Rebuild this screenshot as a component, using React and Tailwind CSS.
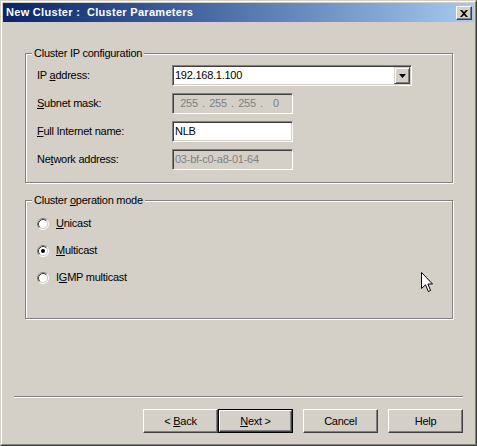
import React from 'react';

function Key({ children }) {
  return <span className="underline underline-offset-[1px] decoration-1">{children}</span>;
}

function Sunken({ className = '', children }) {
  return (
    <div
      className={`h-[21px] flex items-center border border-t-[#808080] border-l-[#808080] border-r-white border-b-white shadow-[inset_1px_1px_0_#404040,inset_-1px_-1px_0_#d4d0c8] ${className}`}
    >
      {children}
    </div>
  );
}

function Button({ children, isDefault = false, className = '' }) {
  const face = (
    <div className="h-full flex items-center justify-center border border-t-white border-l-white border-r-[#404040] border-b-[#404040] shadow-[inset_-1px_-1px_0_#808080]">
      {children}
    </div>
  );
  if (isDefault) {
    return <div className={`w-[75px] h-[24px] border border-black ${className}`}>{face}</div>;
  }
  return <div className={`w-[75px] h-[24px] ${className}`}>{face}</div>;
}

function Radio({ checked }) {
  return (
    <svg width="12" height="12" viewBox="0 0 12 12" className="shrink-0">
      <circle cx="6" cy="6" r="4.5" fill="#fff" />
      <path d="M2.11 9.89 A5.5 5.5 0 0 1 9.89 2.11" fill="none" stroke="#808080" />
      <path d="M9.89 2.11 A5.5 5.5 0 0 1 2.11 9.89" fill="none" stroke="#fff" />
      <path d="M2.82 9.18 A4.5 4.5 0 0 1 9.18 2.82" fill="none" stroke="#404040" />
      <path d="M9.18 2.82 A4.5 4.5 0 0 1 2.82 9.18" fill="none" stroke="#d4d0c8" />
      {checked && <circle cx="6" cy="6" r="2" fill="#000" />}
    </svg>
  );
}

function Row({ label, children }) {
  return (
    <div className="h-[21px] flex items-center">
      <div className="w-[135px]">{label}</div>
      {children}
    </div>
  );
}

export default function App() {
  return (
    <div className="relative w-[477px] h-[446px] overflow-hidden bg-[#d4d0c8] font-['Liberation_Sans',Arial,sans-serif] text-[11px] leading-[13px] tracking-[-0.25px] text-black">
      <div className="h-full border border-t-[#d4d0c8] border-l-[#d4d0c8] border-r-[#404040] border-b-[#404040]">
        <div className="h-full flex flex-col p-px border border-t-white border-l-white border-r-[#808080] border-b-[#808080]">
          {/* Title bar */}
          <div className="h-[19px] shrink-0 flex items-center justify-between pl-[3px] pr-[2px] bg-gradient-to-r from-[#0a246a] to-[#a6caf0]">
            <span className="text-white font-bold tracking-[0.3px] whitespace-pre">New Cluster :  Cluster Parameters</span>
            <div className="w-[16px] h-[14px] mt-[1px] flex items-center justify-center bg-[#d4d0c8] border border-t-white border-l-white border-r-[#404040] border-b-[#404040] shadow-[inset_-1px_-1px_0_#808080]">
              <svg width="8" height="7" viewBox="0 0 8 7">
                <path d="M0 0h2l2 2 2-2h2L5 3.5 8 7H6L4 5 2 7H0l3-3.5z" fill="#000" />
              </svg>
            </div>
          </div>

          {/* Cluster IP configuration */}
          <fieldset className="mt-[25px] ml-[22px] mr-[21px] pt-[5px] pb-[12px] border border-[#808080] shadow-[inset_1px_1px_0_#fff,1px_1px_0_#fff]">
            <legend className="ml-[6px] px-[2px] bg-[#d4d0c8]">Cluster IP configuration</legend>
            <div className="pl-[11px] flex flex-col gap-[7px]">
              <Row label={<>IP <Key>a</Key>ddress:</>}>
                <Sunken className="w-[240px] bg-white justify-between pl-[2px] pr-[1px]">
                  <span>192.168.1.100</span>
                  <div className="w-[16px] h-[17px] flex items-center justify-center bg-[#d4d0c8] border border-t-[#d4d0c8] border-l-[#d4d0c8] border-r-[#404040] border-b-[#404040] shadow-[inset_1px_1px_0_#fff,inset_-1px_-1px_0_#808080]">
                    <svg width="7" height="4" viewBox="0 0 7 4">
                      <path d="M0 0h7L3.5 4z" fill="#000" />
                    </svg>
                  </div>
                </Sunken>
              </Row>
              <Row label={<><Key>S</Key>ubnet mask:</>}>
                <Sunken className="w-[121px] pl-[7px] text-[#808080]">
                  <span className="w-[18px] text-center">255</span>
                  <span className="w-[11px] text-center">.</span>
                  <span className="w-[18px] text-center">255</span>
                  <span className="w-[11px] text-center">.</span>
                  <span className="w-[18px] text-center">255</span>
                  <span className="w-[11px] text-center">.</span>
                  <span className="w-[18px] text-center">0</span>
                </Sunken>
              </Row>
              <Row label={<><Key>F</Key>ull Internet name:</>}>
                <Sunken className="w-[121px] bg-white pl-[2px]">
                  <span>NLB</span>
                </Sunken>
              </Row>
              <Row label={<>Ne<Key>t</Key>work address:</>}>
                <Sunken className="w-[121px] pl-[2px] text-[#808080]">
                  <span>03-bf-c0-a8-01-64</span>
                </Sunken>
              </Row>
            </div>
          </fieldset>

          {/* Cluster operation mode */}
          <fieldset className="mt-[11px] ml-[22px] mr-[21px] pt-[8px] pb-[32px] border border-[#808080] shadow-[inset_1px_1px_0_#fff,1px_1px_0_#fff]">
            <legend className="ml-[6px] px-[2px] bg-[#d4d0c8]">Cluster <Key>o</Key>peration mode</legend>
            <div className="pl-[11px] flex flex-col gap-[10px]">
              <label className="h-[17px] flex items-center gap-[7px]">
                <Radio />
                <span><Key>U</Key>nicast</span>
              </label>
              <label className="h-[17px] flex items-center gap-[7px]">
                <Radio checked />
                <span><Key>M</Key>ulticast</span>
              </label>
              <label className="h-[17px] flex items-center gap-[7px]">
                <Radio />
                <span>I<Key>G</Key>MP multicast</span>
              </label>
            </div>
          </fieldset>

          {/* Separator */}
          <div className="mt-[77px] mx-[11px] border-t border-t-[#808080] border-b border-b-white" />

          {/* Buttons */}
          <div className="mt-[11px] mr-[11px] flex justify-end">
            <Button><span>&lt; <Key>B</Key>ack</span></Button>
            <Button isDefault><span><Key>N</Key>ext &gt;</span></Button>
            <Button className="ml-[10px]">Cancel</Button>
            <Button className="ml-[10px]">Help</Button>
          </div>
        </div>
      </div>

      {/* Mouse cursor */}
      <svg className="absolute left-[421px] top-[272px]" width="13" height="21" viewBox="0 0 13 21">
        <path d="M0.5 0.5V16.5L4.5 12.8L7.3 19.5L9.6 18.5L6.9 12H11.5Z" fill="#fff" stroke="#000" strokeLinejoin="miter" />
      </svg>
    </div>
  );
}
